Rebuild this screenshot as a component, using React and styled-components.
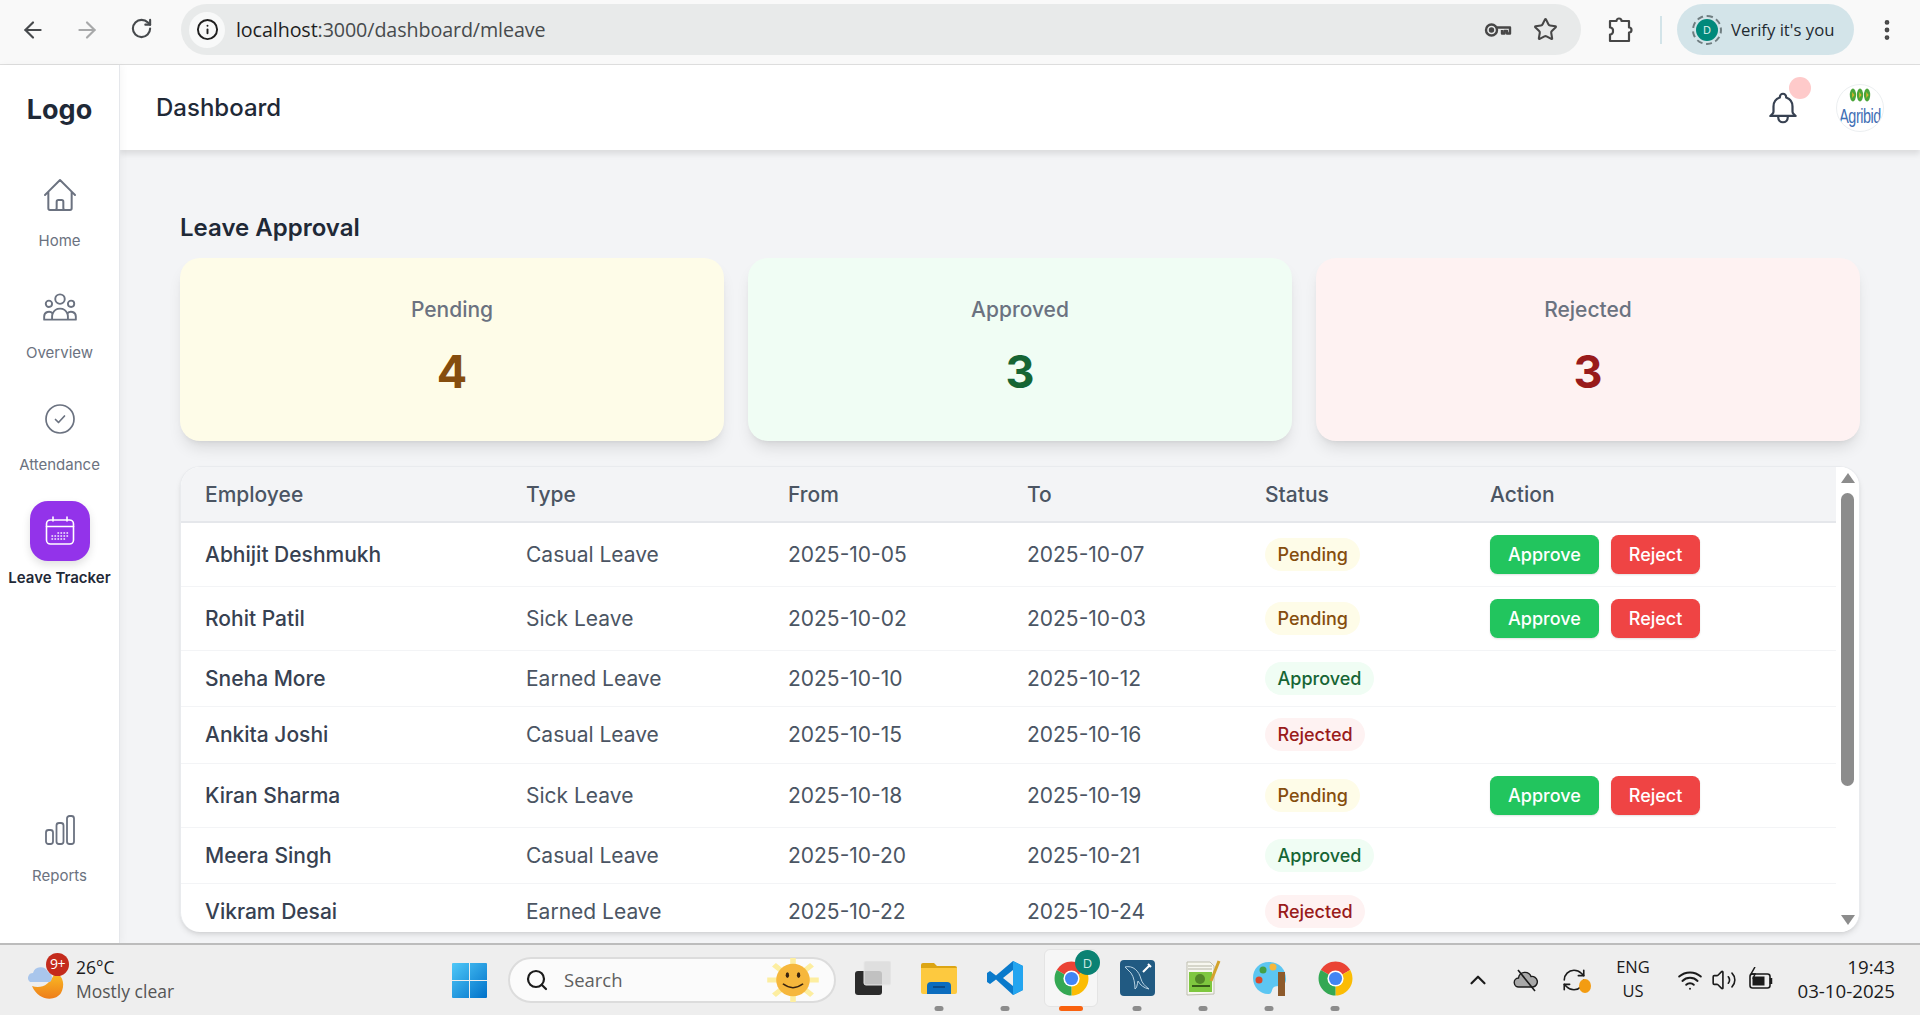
import React from 'react'
import styled, { createGlobalStyle } from 'styled-components'
import {
  ArrowLeft, ArrowRight, RotateCw, Info, Star, EllipsisVertical, Search, ChevronUp,
  RefreshCw, Wifi, Volume2,
} from 'lucide-react'
import { HiOutlineHome, HiOutlineUserGroup, HiOutlineBell } from 'react-icons/hi'

const GlobalStyle = createGlobalStyle`
  html, body { margin: 0; padding: 0; height: 100%; overflow: hidden; }
  body { font-family: Inter, "Liberation Sans", sans-serif; background: #f3f4f6; }
  #root { height: 100%; }
  * { box-sizing: border-box; }
`

const Page = styled.div`
  height: 1015px;
  display: flex;
  flex-direction: column;
`

/* browser chrome */
const Toolbar = styled.div`
  height: 65px;
  flex-shrink: 0;
  background: #f9f9f9;
  border-bottom: 1px solid #dedede;
  display: flex;
  align-items: center;
  padding: 0 0 5px 0;
  font-family: "Open Sans", "Liberation Sans", sans-serif;
`
const NavButton = styled.div`
  width: 54px;
  display: flex;
  justify-content: center;
  color: ${p => (p.$off ? '#a8a9aa' : '#474a4d')};
`
const NavGroup = styled.div`
  display: flex;
  padding-left: 6px;
  margin-right: 13px;
`
const Omnibox = styled.div`
  width: 1400px;
  height: 51px;
  border-radius: 26px;
  background: #e8eaea;
  display: flex;
  align-items: center;
  padding: 0 23px 0 8px;
  color: #1f1f1f;
`
const InfoChip = styled.div`
  width: 36px;
  height: 36px;
  border-radius: 50%;
  background: #f8f9f9;
  display: flex;
  align-items: center;
  justify-content: center;
`
const Url = styled.div`
  margin-left: 11px;
  flex: 1;
  font-size: 19.7px;
  letter-spacing: -0.1px;
  color: #474a4d;
  white-space: nowrap;
  span { color: #1f1f1f; }
`
const OmniIcons = styled.div`
  display: flex;
  align-items: center;
  gap: 21px;
  color: #474747;
`
const Extension = styled.div`
  margin-left: 27px;
  display: flex;
  color: #474747;
`
const ToolbarDivider = styled.div`
  width: 2px;
  height: 28px;
  margin: 0 15px 0 26px;
  background: #d3e4e9;
`
const VerifyPill = styled.div`
  width: 177px;
  height: 51px;
  border-radius: 26px;
  background: #d3e4e9;
  display: flex;
  align-items: center;
  padding-left: 15px;
  gap: 9px;
  font-size: 16.7px;
  color: #1f2a30;
  white-space: nowrap;
`
const ProfileRing = styled.div`
  width: 30px;
  height: 30px;
  border-radius: 50%;
  border: 2px dashed #6f7d80;
  display: flex;
  align-items: center;
  justify-content: center;
  flex-shrink: 0;
`
const ProfileDot = styled.div`
  width: 22px;
  height: 22px;
  border-radius: 50%;
  background: #00897b;
  color: #e6f5f2;
  font-size: 11px;
  display: flex;
  align-items: center;
  justify-content: center;
`
const MenuDots = styled.div`
  margin-left: 20px;
  display: flex;
  color: #474747;
`

/* app shell */
const Shell = styled.div`
  flex: 1;
  min-height: 0;
  display: flex;
`
const Sidebar = styled.aside`
  width: 120px;
  flex-shrink: 0;
  background: #fff;
  border-right: 1px solid #e5e7eb;
  box-shadow: 2px 0 8px rgba(0, 0, 0, 0.04);
  display: flex;
  flex-direction: column;
  align-items: center;
  z-index: 2;
`
const Logo = styled.div`
  font-size: 27px;
  font-weight: 700;
  color: #1f2937;
  margin-top: 27px;
  height: 36px;
  line-height: 36px;
  margin-bottom: 47px;
`
const NavItem = styled.div`
  width: 100%;
  height: 112px;
  display: flex;
  flex-direction: column;
  align-items: center;
  color: #6b7280;
  font-size: 15px;
  white-space: nowrap;
  svg { display: block; }
`
const NavIconSlot = styled.div`
  height: 40px;
  display: flex;
  align-items: center;
  justify-content: center;
  margin-bottom: 16px;
`
const ActiveIcon = styled.div`
  width: 60px;
  height: 60px;
  border-radius: 18px;
  background: #9333ea;
  box-shadow: 0 4px 8px rgba(0, 0, 0, 0.12);
  display: flex;
  align-items: center;
  justify-content: center;
  margin-bottom: 7px;
`
const ActiveItem = styled(NavItem)`
  color: #1f2937;
  font-weight: 600;
  margin-top: -10px;
`
const ReportsItem = styled(NavItem)`
  margin-top: auto;
  height: 133px;
`

const Content = styled.div`
  flex: 1;
  min-width: 0;
  display: flex;
  flex-direction: column;
`
const Header = styled.header`
  height: 85px;
  flex-shrink: 0;
  background: #fff;
  box-shadow: 0 4px 6px rgba(0, 0, 0, 0.1);
  display: flex;
  align-items: center;
  padding: 0 36px;
  z-index: 1;
`
const HeaderTitle = styled.h1`
  margin: 0;
  flex: 1;
  font-size: 24px;
  font-weight: 500;
  color: #1f2937;
`
const BellWrap = styled.div`
  position: relative;
  display: flex;
  color: #374151;
  margin: 0 34px 0 0;
`
const BellDot = styled.div`
  position: absolute;
  top: -12px;
  right: -9px;
  width: 22px;
  height: 22px;
  border-radius: 50%;
  background: #fecaca;
`
const Avatar = styled.div`
  width: 48px;
  height: 48px;
  border-radius: 50%;
  border: 1px solid #eceff1;
  background: #fff;
  display: flex;
  flex-direction: column;
  align-items: center;
  overflow: hidden;
  padding-top: 3px;
`
const AvatarText = styled.div`
  margin-top: 3px;
  font-family: "Liberation Sans", sans-serif;
  font-size: 20px;
  line-height: 22px;
  color: #3f6fb5;
  letter-spacing: -0.6px;
  transform: scaleX(0.72);
`

const Main = styled.main`
  flex: 1;
  min-height: 0;
  padding: 60px 60px 11px 60px;
  display: flex;
  flex-direction: column;
`
const PageTitle = styled.h2`
  margin: 0 0 13px;
  font-size: 24px;
  line-height: 35px;
  font-weight: 600;
  color: #1f2937;
`
const Cards = styled.div`
  display: grid;
  grid-template-columns: repeat(3, 1fr);
  gap: 24px;
  margin-bottom: 25px;
`
const Card = styled.div`
  height: 183px;
  border-radius: 20px;
  background: ${p => p.$bg};
  box-shadow: 0 10px 15px -3px rgba(0, 0, 0, 0.1), 0 4px 6px -4px rgba(0, 0, 0, 0.1);
  padding-top: 37px;
  text-align: center;
`
const CardLabel = styled.div`
  font-size: 21px;
  line-height: 30px;
  font-weight: 500;
  color: #6b7280;
`
const CardValue = styled.div`
  margin-top: 22px;
  font-size: 45px;
  line-height: 50px;
  font-weight: 700;
  color: ${p => p.$color};
`
const TableCard = styled.div`
  flex: 1;
  min-height: 0;
  display: flex;
  background: #fff;
  border: 1px solid #e9ebee;
  border-bottom: none;
  border-radius: 20px;
  overflow: hidden;
  box-shadow: 0 4px 6px -1px rgba(0, 0, 0, 0.1), 0 2px 4px -2px rgba(0, 0, 0, 0.1);
`
const TableScroll = styled.div`
  flex: 1;
  min-width: 0;
  overflow: hidden;
`
const Table = styled.table`
  width: 100%;
  border-collapse: collapse;
  table-layout: fixed;
`
const Th = styled.th`
  width: ${p => p.$w}px;
  height: 55px;
  padding: 0 0 0 24px;
  text-align: left;
  font-size: 21px;
  font-weight: 500;
  color: #4b5563;
  background: #f3f4f6;
  border-bottom: 2px solid #e5e7eb;
`
const Row = styled.tr`
  height: ${p => (p.$tall ? 64 : 56.5)}px;
  border-bottom: 1px solid #f3f4f6;
`
const Td = styled.td`
  padding: 0 0 0 24px;
  font-size: 21px;
  color: #4b5563;
  white-space: nowrap;
`
const NameCell = styled(Td)`
  font-weight: 500;
  color: #374151;
`
const Badge = styled.span`
  display: inline-block;
  height: 33px;
  line-height: 33px;
  padding: 0 12.5px;
  border-radius: 17px;
  font-size: 18px;
  font-weight: 500;
  background: ${p => p.$bg};
  color: ${p => p.$color};
`
const Actions = styled.div`
  display: flex;
  gap: 12px;
`
const ActionButton = styled.button`
  height: 39px;
  padding: 0 18px;
  border: none;
  border-radius: 7.5px;
  font-family: inherit;
  font-size: 18px;
  font-weight: 500;
  color: #fff;
  background: ${p => p.$bg};
  box-shadow: 0 1px 2px rgba(0, 0, 0, 0.12);
`
const Scrollbar = styled.div`
  width: 23px;
  flex-shrink: 0;
  background: #fff;
  display: flex;
  flex-direction: column;
  align-items: center;
  padding: 6px 0 7px 0;
`
const Thumb = styled.div`
  width: 13px;
  height: 293px;
  margin-top: 10px;
  border-radius: 7px;
  background: #8c8c8c;
`
const ArrowDown = styled.div`
  margin-top: auto;
  width: 0;
  height: 0;
  border-left: 7px solid transparent;
  border-right: 7px solid transparent;
  border-top: 10px solid #8c8c8c;
`
const ArrowUp = styled.div`
  width: 0;
  height: 0;
  border-left: 7px solid transparent;
  border-right: 7px solid transparent;
  border-bottom: 10px solid #8c8c8c;
`

/* windows taskbar */
const Taskbar = styled.footer`
  height: 72px;
  flex-shrink: 0;
  background: #eeeeee;
  border-top: 2px solid #bcbcbc;
  display: flex;
  align-items: center;
  padding-left: 28px;
  font-family: "Open Sans", "Liberation Sans", sans-serif;
  color: #1b1b1b;
  z-index: 3;
`
const Weather = styled.div`
  width: 424px;
  display: flex;
  align-items: center;
  gap: 11px;
`
const WeatherIcon = styled.div`
  position: relative;
  width: 37px;
  height: 44px;
  display: flex;
`
const WeatherBadge = styled.div`
  position: absolute;
  top: -5px;
  left: 18px;
  width: 23px;
  height: 23px;
  border-radius: 50%;
  background: #c42b1c;
  color: #fff;
  font-size: 14px;
  line-height: 22px;
  text-align: center;
  letter-spacing: -0.5px;
`
const WeatherText = styled.div`
  font-size: 17.5px;
  line-height: 24px;
  margin-top: -2px;
  span { display: block; color: #555; }
`
const SearchBox = styled.div`
  width: 328px;
  height: 46px;
  margin: 0 4px 0 21px;
  border-radius: 23px;
  background: #fbfbfb;
  border: 2px solid #dcdcdc;
  display: flex;
  align-items: center;
  padding: 0 13px 0 15px;
  gap: 15px;
  color: #5f5f5f;
  font-size: 18.5px;
  svg:first-child { color: #1b1b1b; }
`
const SearchLabel = styled.div`
  flex: 1;
  margin-top: -2px;
`
const TaskSlot = styled.div`
  position: relative;
  width: 66px;
  height: 70px;
  display: flex;
  align-items: center;
  justify-content: center;
  padding-bottom: 4px;
`
const ActiveTile = styled.div`
  width: 54px;
  height: 58px;
  border-radius: 6px;
  background: #f6f6f6;
  border: 1px solid #e4e4e4;
  display: flex;
  align-items: center;
  justify-content: center;
`
const RunDot = styled.div`
  position: absolute;
  bottom: 4px;
  left: 50%;
  transform: translateX(-50%);
  width: ${p => (p.$active ? 24 : 9)}px;
  height: 5px;
  border-radius: 3px;
  background: ${p => (p.$active ? '#f9620f' : '#8c8c8c')};
`
const ProfileBadge = styled.div`
  position: absolute;
  top: 5px;
  right: 4px;
  width: 25px;
  height: 25px;
  border-radius: 50%;
  background: #0b8273;
  color: #cfe9e4;
  font-size: 13px;
  display: flex;
  align-items: center;
  justify-content: center;
`
const Tray = styled.div`
  margin-left: auto;
  display: flex;
  align-items: center;
  padding-right: 25px;
  svg { display: block; }
`
const TrayIcon = styled.div`
  width: ${p => p.$w}px;
  display: flex;
  justify-content: center;
  position: relative;
`
const SyncDot = styled.div`
  position: absolute;
  right: 7px;
  bottom: 0;
  width: 12px;
  height: 14px;
  border-radius: 50%;
  background: #f39c12;
`
const Lang = styled.div`
  width: 52px;
  margin: -2px 14px 0 9px;
  text-align: center;
  font-size: 16.5px;
  line-height: 24px;
`
const Clock = styled.div`
  margin: -2px 0 0 14px;
  width: 100px;
  text-align: right;
  font-size: 18.7px;
  line-height: 24px;
  white-space: nowrap;
`

const ChromeIcon = ({ size = 37 }) => (
  <svg width={size} height={size} viewBox="0 0 48 48">
    <path d="M24 24L4.95 13A22 22 0 0 1 43.05 13Z" fill="#ea4335" />
    <path d="M24 24L43.05 13A22 22 0 0 1 24 46Z" fill="#fbbc04" />
    <path d="M24 24L24 46A22 22 0 0 1 4.95 13Z" fill="#34a853" />
    <circle cx="24" cy="24" r="10.5" fill="#fff" />
    <circle cx="24" cy="24" r="8.5" fill="#4285f4" />
  </svg>
)

const KeyIcon = () => (
  <svg width="28" height="16" viewBox="0 0 28 16" fill="none" stroke="#474747" strokeWidth="2.4">
    <circle cx="7.5" cy="8" r="5.5" />
    <circle cx="7.5" cy="8" r="1.5" fill="#474747" />
    <path d="M13 5.5h13v6h-3v-2.5h-2.5v2.5h-2.5v-3.5" strokeLinejoin="round" />
  </svg>
)

const PuzzleIcon = () => (
  <svg width="26" height="28" viewBox="0 0 26 28" fill="none" stroke="#474747" strokeWidth="2.2" strokeLinejoin="round">
    <path d="M2 5h6.5a2.5 2.5 0 0 1 5 0H21v6.5a2.5 2.5 0 0 1 0 5V25H2v-6.5a3 3 0 0 0 3-3.5a3 3 0 0 0-3-3.5Z" />
  </svg>
)

const CheckCircleIcon = () => (
  <svg width="30" height="30" viewBox="0 0 30 30" fill="none" stroke="#6b7280" strokeWidth="1.7" strokeLinecap="round" strokeLinejoin="round">
    <circle cx="15" cy="15" r="14" />
    <path d="M10.5 15.5l3 3 6-6.5" />
  </svg>
)

const CalendarIcon = () => (
  <svg width="30" height="30" viewBox="0 0 30 30" fill="none" stroke="#fff" strokeWidth="1.6" strokeLinecap="round">
    <rect x="1.5" y="4" width="27" height="24" rx="4" />
    <path d="M1.5 10.5h27M8 1v4M22 1v4" />
    <path
      d="M7 20h.5M10 20h.5M13 20h.5M16 20h.5M19 20h.5M22 20h.5M13 17h.5M16 17h.5M19 17h.5M22 17h.5M7 23h.5M10 23h.5M13 23h.5M16 23h.5M19 23h.5"
      strokeWidth="1.5"
    />
  </svg>
)

const BarsIcon = () => (
  <svg width="30" height="30" viewBox="0 0 30 30" fill="none" stroke="#6b7280" strokeWidth="1.8">
    <rect x="1" y="15" width="7" height="14" rx="2.5" />
    <rect x="11.5" y="8" width="7" height="21" rx="2.5" />
    <rect x="22" y="1" width="7" height="28" rx="2.5" />
  </svg>
)

const AgribidMark = () => (
  <svg width="22" height="14" viewBox="0 0 28 14" preserveAspectRatio="none">
    <ellipse cx="5" cy="7" rx="4" ry="6.5" fill="#4ba53a" />
    <ellipse cx="14" cy="7" rx="4" ry="6.5" fill="#4ba53a" />
    <ellipse cx="23" cy="7" rx="4" ry="6.5" fill="#4ba53a" />
    <path d="M4 4l3 3-3 3zM13 4l3 3-3 3zM22 4l3 3-3 3z" fill="#d8b42c" />
  </svg>
)

const CloudMoonIcon = () => (
  <svg width="37" height="44" viewBox="0 0 37 44">
    <defs>
      <linearGradient id="moon" x1="0" y1="0" x2="0" y2="1">
        <stop offset="0" stopColor="#fbbf24" />
        <stop offset="1" stopColor="#ee7d1a" />
      </linearGradient>
    </defs>
    <path d="M4 28c8 3 18 0 23-14 9 4 10 14 6 21-5 8-22 9-29-7Z" fill="url(#moon)" />
    <path d="M2 24a5 5 0 0 1 3-9 8 8 0 0 1 15-1 6 6 0 0 1 2 10Z" fill="#a9c6ec" />
  </svg>
)

const WindowsLogo = () => (
  <svg width="35" height="35" viewBox="0 0 35 35">
    <defs>
      <linearGradient id="win" x1="0" y1="0" x2="1" y2="1">
        <stop offset="0" stopColor="#4fc8f8" />
        <stop offset="1" stopColor="#0071c9" />
      </linearGradient>
    </defs>
    <path d="M1 0h16v17H0V1a1 1 0 0 1 1-1ZM18 0h16a1 1 0 0 1 1 1v16H18ZM0 18h17v17H1a1 1 0 0 1-1-1ZM18 18h17v16a1 1 0 0 1-1 1H18Z" fill="url(#win)" />
  </svg>
)

const SunSmiley = () => (
  <svg width="56" height="44" viewBox="0 0 50 46" preserveAspectRatio="none">
    <g stroke="#fdeea0" strokeWidth="5">
      <path d="M25 0v46M2 23h46M8 7l34 32M42 7L8 39" />
    </g>
    <ellipse cx="25" cy="23" rx="15" ry="17" fill="#f6b73c" />
    <ellipse cx="20" cy="18" rx="1.5" ry="3" fill="#3a2410" />
    <ellipse cx="30" cy="18" rx="1.5" ry="3" fill="#3a2410" />
    <path d="M16 27q9 8 18 0" fill="none" stroke="#3a2410" strokeWidth="1.5" />
  </svg>
)

const TaskViewIcon = () => (
  <svg width="36" height="34" viewBox="0 0 36 34">
    <rect x="0" y="10" width="27" height="24" rx="3" fill="#2b2b2b" />
    <rect x="9" y="0" width="27" height="24" rx="2" fill="#dcdcdc" fillOpacity="0.85" stroke="#e8e8e8" />
  </svg>
)

const ExplorerIcon = () => (
  <svg width="36" height="32" viewBox="0 0 36 32">
    <path d="M0 3a2 2 0 0 1 2-2h11l3 3h18a2 2 0 0 1 2 2v3H0Z" fill="#dca514" />
    <path d="M0 6h36v24a2 2 0 0 1-2 2H2a2 2 0 0 1-2-2Z" fill="#fdc93f" />
    <path d="M6 32v-8a4 4 0 0 1 4-4h16a4 4 0 0 1 4 4v8Z" fill="#0b6cbe" />
    <path d="M12 25h12" stroke="#0a4a88" strokeWidth="2" />
  </svg>
)

const VSCodeIcon = () => (
  <svg width="36" height="36" viewBox="0 0 36 36">
    <path d="M26 1l10 5v24l-10 5-17-15.5-6 4.5-3-2v-9l3-2 6 4.5Z" fill="#0a7acb" />
    <path d="M26 1l10 5v24l-10 5Z" fill="#23a5f0" />
    <path d="M26 10l-10 8 10 8Z" fill="#eeeeee" />
  </svg>
)

const MySqlIcon = () => (
  <svg width="35" height="36" viewBox="0 0 35 36">
    <rect width="35" height="36" rx="4" fill="#215a82" />
    <path d="M5 7c8-2 14 4 16 12 1 4 4 7 8 10-5-1-9-4-11-8-1 4-1 7-3 8 0-5-1-12-4-16-2-2-4-4-6-6Z" fill="none" stroke="#b9d3e3" strokeWidth="1" />
    <path d="M23 12l6-6M28 4l3 3" stroke="#fff" strokeWidth="2" />
  </svg>
)

const NotepadIcon = () => (
  <svg width="35" height="36" viewBox="0 0 35 36">
    <path d="M1 2h23l4 4v28l-27 1Z" fill="#f7f7f0" stroke="#bfbfb0" />
    <path d="M2 6h24M2 9h24" stroke="#b5b5a5" />
    <rect x="3" y="12" width="23" height="20" fill="#7ec73f" />
    <circle cx="14" cy="19" r="5" fill="#365b18" fillOpacity="0.6" />
    <path d="M6 26h18" stroke="#365b18" strokeWidth="2" fill="none" />
    <path d="M33 1L25 21" stroke="#d3a32c" strokeWidth="3" />
  </svg>
)

const PaintIcon = () => (
  <svg width="33" height="36" viewBox="0 0 33 36">
    <path d="M16 2C6 2 0 9 0 18s7 16 15 16c5 0 3-5 6-7 3-2 12 1 12-8C33 9 26 2 16 2Z" fill="#5cc6f2" />
    <circle cx="10" cy="10" r="3.5" fill="#43a047" />
    <circle cx="20" cy="7" r="3.5" fill="#f6b73c" />
    <circle cx="6" cy="20" r="3.5" fill="#d9482b" />
    <path d="M25 12h7v24h-7z" fill="#8d5a2b" />
  </svg>
)

const CloudSlashIcon = () => (
  <svg width="26" height="26" viewBox="0 0 26 26" fill="none" stroke="#1b1b1b" strokeWidth="1.4">
    <path d="M6 20a4.5 4.5 0 0 1-.5-9A6.5 6.5 0 0 1 18 9.5a5.2 5.2 0 0 1 2 10.5Z" fill="#a8a8a8" />
    <path d="M5 3l17 21" strokeWidth="1.6" />
  </svg>
)

const BatteryIcon = () => (
  <svg width="26" height="26" viewBox="0 0 26 26" fill="none" stroke="#1b1b1b" strokeWidth="1.6">
    <rect x="2" y="7" width="20" height="14" rx="2.5" />
    <rect x="4.5" y="9.5" width="12" height="9" fill="#1b1b1b" stroke="none" />
    <path d="M23 11v6" strokeWidth="2.5" />
    <path d="M7 0L3 7h4l-2 5" strokeWidth="1.5" />
  </svg>
)

const statusStyles = {
  Pending: { $bg: '#fefce8', $color: '#854d0e' },
  Approved: { $bg: '#f0fdf4', $color: '#166534' },
  Rejected: { $bg: '#fef2f2', $color: '#991b1b' },
}

const summary = [
  { label: 'Pending', value: 4, bg: '#fefce8', color: '#854d0e' },
  { label: 'Approved', value: 3, bg: '#f0fdf4', color: '#166534' },
  { label: 'Rejected', value: 3, bg: '#fef2f2', color: '#991b1b' },
]

const columns = [
  ['Employee', 321], ['Type', 262], ['From', 239], ['To', 238], ['Status', 225], ['Action', 370],
]

const leaves = [
  ['Abhijit Deshmukh', 'Casual Leave', '2025-10-05', '2025-10-07', 'Pending'],
  ['Rohit Patil', 'Sick Leave', '2025-10-02', '2025-10-03', 'Pending'],
  ['Sneha More', 'Earned Leave', '2025-10-10', '2025-10-12', 'Approved'],
  ['Ankita Joshi', 'Casual Leave', '2025-10-15', '2025-10-16', 'Rejected'],
  ['Kiran Sharma', 'Sick Leave', '2025-10-18', '2025-10-19', 'Pending'],
  ['Meera Singh', 'Casual Leave', '2025-10-20', '2025-10-21', 'Approved'],
  ['Vikram Desai', 'Earned Leave', '2025-10-22', '2025-10-24', 'Rejected'],
]

const App = () => (
  <Page>
    <GlobalStyle />
    <Toolbar>
      <NavGroup>
        <NavButton><ArrowLeft size={26} strokeWidth={2} /></NavButton>
        <NavButton $off><ArrowRight size={26} strokeWidth={2} /></NavButton>
        <NavButton><RotateCw size={23} strokeWidth={2.2} /></NavButton>
      </NavGroup>
      <Omnibox>
        <InfoChip><Info size={23} strokeWidth={2} color="#1f1f1f" /></InfoChip>
        <Url><span>localhost</span>:3000/dashboard/mleave</Url>
        <OmniIcons>
          <KeyIcon />
          <Star size={25} strokeWidth={2} />
        </OmniIcons>
      </Omnibox>
      <Extension><PuzzleIcon /></Extension>
      <ToolbarDivider />
      <VerifyPill>
        <ProfileRing><ProfileDot>D</ProfileDot></ProfileRing>
        Verify it's you
      </VerifyPill>
      <MenuDots><EllipsisVertical size={26} strokeWidth={2.4} /></MenuDots>
    </Toolbar>

    <Shell>
      <Sidebar>
        <Logo>Logo</Logo>
        <NavItem>
          <NavIconSlot><HiOutlineHome size={40} strokeWidth={1.2} /></NavIconSlot>
          Home
        </NavItem>
        <NavItem>
          <NavIconSlot><HiOutlineUserGroup size={38} strokeWidth={1.2} /></NavIconSlot>
          Overview
        </NavItem>
        <NavItem>
          <NavIconSlot><CheckCircleIcon /></NavIconSlot>
          Attendance
        </NavItem>
        <ActiveItem>
          <ActiveIcon><CalendarIcon /></ActiveIcon>
          Leave Tracker
        </ActiveItem>
        <ReportsItem>
          <NavIconSlot><BarsIcon /></NavIconSlot>
          Reports
        </ReportsItem>
      </Sidebar>

      <Content>
        <Header>
          <HeaderTitle>Dashboard</HeaderTitle>
          <BellWrap>
            <HiOutlineBell size={38} strokeWidth={1.4} />
            <BellDot />
          </BellWrap>
          <Avatar>
            <AgribidMark />
            <AvatarText>Agribid</AvatarText>
          </Avatar>
        </Header>
        <Main>
          <PageTitle>Leave Approval</PageTitle>
          <Cards>
            {summary.map(item => (
              <Card key={item.label} $bg={item.bg}>
                <CardLabel>{item.label}</CardLabel>
                <CardValue $color={item.color}>{item.value}</CardValue>
              </Card>
            ))}
          </Cards>
          <TableCard>
            <TableScroll>
              <Table>
                <thead>
                  <tr>
                    {columns.map(([name, w]) => <Th key={name} $w={w}>{name}</Th>)}
                  </tr>
                </thead>
                <tbody>
                  {leaves.map(([name, type, from, to, status]) => (
                    <Row key={name} $tall={status === 'Pending'}>
                      <NameCell>{name}</NameCell>
                      <Td>{type}</Td>
                      <Td>{from}</Td>
                      <Td>{to}</Td>
                      <Td><Badge {...statusStyles[status]}>{status}</Badge></Td>
                      <Td>
                        {status === 'Pending' && (
                          <Actions>
                            <ActionButton $bg="#22c55e">Approve</ActionButton>
                            <ActionButton $bg="#ef4444">Reject</ActionButton>
                          </Actions>
                        )}
                      </Td>
                    </Row>
                  ))}
                </tbody>
              </Table>
            </TableScroll>
            <Scrollbar>
              <ArrowUp />
              <Thumb />
              <ArrowDown />
            </Scrollbar>
          </TableCard>
        </Main>
      </Content>
    </Shell>

    <Taskbar>
      <Weather>
        <WeatherIcon>
          <CloudMoonIcon />
          <WeatherBadge>9+</WeatherBadge>
        </WeatherIcon>
        <WeatherText>
          26°C
          <span>Mostly clear</span>
        </WeatherText>
      </Weather>
      <WindowsLogo />
      <SearchBox>
        <Search size={24} strokeWidth={2.2} />
        <SearchLabel>Search</SearchLabel>
        <SunSmiley />
      </SearchBox>
      <TaskSlot><TaskViewIcon /></TaskSlot>
      <TaskSlot><ExplorerIcon /><RunDot /></TaskSlot>
      <TaskSlot><VSCodeIcon /><RunDot /></TaskSlot>
      <TaskSlot>
        <ActiveTile><ChromeIcon /></ActiveTile>
        <ProfileBadge>D</ProfileBadge>
        <RunDot $active />
      </TaskSlot>
      <TaskSlot><MySqlIcon /><RunDot /></TaskSlot>
      <TaskSlot><NotepadIcon /><RunDot /></TaskSlot>
      <TaskSlot><PaintIcon /><RunDot /></TaskSlot>
      <TaskSlot><ChromeIcon /><RunDot /></TaskSlot>
      <Tray>
        <TrayIcon $w={48}><ChevronUp size={26} strokeWidth={2} /></TrayIcon>
        <TrayIcon $w={48}><CloudSlashIcon /></TrayIcon>
        <TrayIcon $w={48}>
          <RefreshCw size={26} strokeWidth={1.5} />
          <SyncDot />
        </TrayIcon>
        <Lang>ENG<br />US</Lang>
        <TrayIcon $w={34}><Wifi size={26} strokeWidth={1.8} /></TrayIcon>
        <TrayIcon $w={34}><Volume2 size={26} strokeWidth={1.5} /></TrayIcon>
        <TrayIcon $w={40}><BatteryIcon /></TrayIcon>
        <Clock>19:43<br />03-10-2025</Clock>
      </Tray>
    </Taskbar>
  </Page>
)

export default App
